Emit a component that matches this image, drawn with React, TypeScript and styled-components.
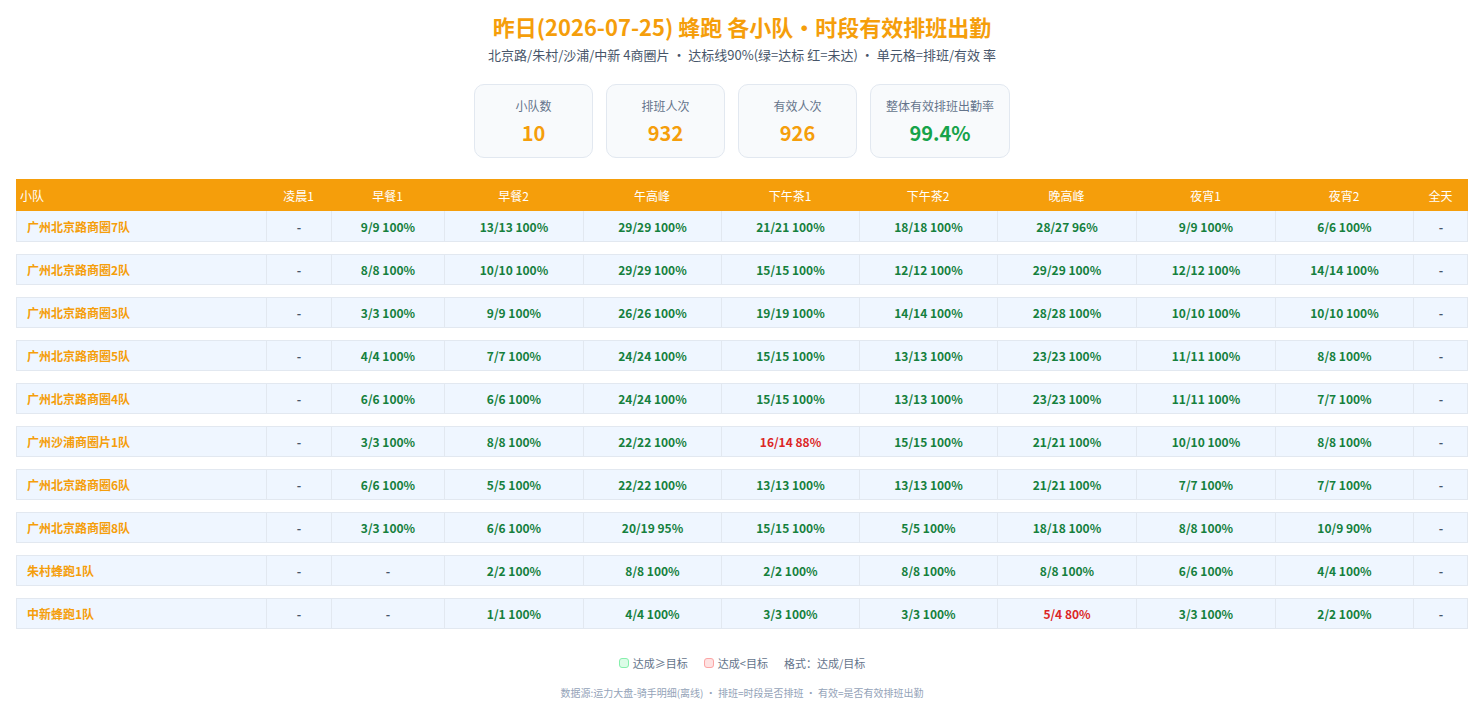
import React from "react";
import styled, { createGlobalStyle } from "styled-components";

const GlobalStyle = createGlobalStyle`
  body {
    margin: 0;
    background: #ffffff;
    font-family: "Noto Sans CJK SC", "Noto Sans", sans-serif;
  }
`;

type Cell = [number, number] | null;

interface Team {
  name: string;
  cells: Cell[];
}

const columns = ["凌晨1", "早餐1", "早餐2", "午高峰", "下午茶1", "下午茶2", "晚高峰", "夜宵1", "夜宵2", "全天"];
const widths = [250, 65, 113, 139, 138, 138, 138, 139, 139, 138, 55];

const teams: Team[] = [
  { name: "广州北京路商圈7队", cells: [null, [9, 9], [13, 13], [29, 29], [21, 21], [18, 18], [28, 27], [9, 9], [6, 6], null] },
  { name: "广州北京路商圈2队", cells: [null, [8, 8], [10, 10], [29, 29], [15, 15], [12, 12], [29, 29], [12, 12], [14, 14], null] },
  { name: "广州北京路商圈3队", cells: [null, [3, 3], [9, 9], [26, 26], [19, 19], [14, 14], [28, 28], [10, 10], [10, 10], null] },
  { name: "广州北京路商圈5队", cells: [null, [4, 4], [7, 7], [24, 24], [15, 15], [13, 13], [23, 23], [11, 11], [8, 8], null] },
  { name: "广州北京路商圈4队", cells: [null, [6, 6], [6, 6], [24, 24], [15, 15], [13, 13], [23, 23], [11, 11], [7, 7], null] },
  { name: "广州沙浦商圈片1队", cells: [null, [3, 3], [8, 8], [22, 22], [16, 14], [15, 15], [21, 21], [10, 10], [8, 8], null] },
  { name: "广州北京路商圈6队", cells: [null, [6, 6], [5, 5], [22, 22], [13, 13], [13, 13], [21, 21], [7, 7], [7, 7], null] },
  { name: "广州北京路商圈8队", cells: [null, [3, 3], [6, 6], [20, 19], [15, 15], [5, 5], [18, 18], [8, 8], [10, 9], null] },
  { name: "朱村蜂跑1队", cells: [null, null, [2, 2], [8, 8], [2, 2], [8, 8], [8, 8], [6, 6], [4, 4], null] },
  { name: "中新蜂跑1队", cells: [null, null, [1, 1], [4, 4], [3, 3], [3, 3], [5, 4], [3, 3], [2, 2], null] },
];

// 红色的两个格子按截图里的文字写死
const redCells: Record<string, string> = {
  "16/14": "16/14 88%",
  "5/4": "5/4 80%",
};

function cellText(c: [number, number]) {
  const key = `${c[0]}/${c[1]}`;
  if (redCells[key]) return redCells[key];
  const pct = Math.round((c[1] / c[0]) * 100);
  return `${key} ${pct}%`;
}

function isMiss(c: [number, number]) {
  return !!redCells[`${c[0]}/${c[1]}`];
}

const App = () => {
  return (
    <Page>
      <GlobalStyle />
      <Title>昨日(2026-07-25) 蜂跑 各小队・时段有效排班出勤</Title>
      <Subtitle>北京路/朱村/沙浦/中新 4商圈片 ・ 达标线90%(绿=达标 红=未达) ・ 单元格=排班/有效 率</Subtitle>
      <Cards>
        <Card $w={119}>
          <CardLabel>小队数</CardLabel>
          <CardValue>10</CardValue>
        </Card>
        <Card $w={119}>
          <CardLabel>排班人次</CardLabel>
          <CardValue>932</CardValue>
        </Card>
        <Card $w={119}>
          <CardLabel>有效人次</CardLabel>
          <CardValue>926</CardValue>
        </Card>
        <Card $w={140}>
          <CardLabel>整体有效排班出勤率</CardLabel>
          <CardValue $good>99.4%</CardValue>
        </Card>
      </Cards>
      <Table>
        <HeadRow>
          <HeadCell $w={widths[0]} $left>小队</HeadCell>
          {columns.map((c, i) => (
            <HeadCell key={c} $w={widths[i + 1]}>
              {c}
            </HeadCell>
          ))}
        </HeadRow>
        {teams.map((t) => (
          <Row key={t.name}>
            <NameCell $w={widths[0]}>{t.name}</NameCell>
            {t.cells.map((c, i) =>
              c ? (
                <DataCell key={i} $w={widths[i + 1]} $miss={isMiss(c)}>
                  {cellText(c)}
                </DataCell>
              ) : (
                <DashCell key={i} $w={widths[i + 1]}>
                  -
                </DashCell>
              )
            )}
          </Row>
        ))}
      </Table>
      <Legend>
        <LegendItem>
          <Swatch $tone="good" />
          达成≥目标
        </LegendItem>
        <LegendItem>
          <Swatch $tone="bad" />
          达成&lt;目标
        </LegendItem>
        <LegendItem>格式：达成/目标</LegendItem>
      </Legend>
      <Footer>数据源:运力大盘-骑手明细(离线) ・ 排班=时段是否排班 ・ 有效=是否有效排班出勤</Footer>
    </Page>
  );
};

export default App;

const Page = styled.div`
  padding: 10px 16px 14px;
  display: flex;
  flex-direction: column;
  align-items: center;
`;

const Title = styled.h1`
  margin: 0;
  font-size: 22px;
  line-height: 32px;
  font-weight: 700;
  color: #f59e0b;
`;

const Subtitle = styled.div`
  margin-top: 3px;
  font-size: 13px;
  line-height: 20px;
  color: #475569;
`;

const Cards = styled.div`
  display: flex;
  gap: 13px;
  margin-top: 19px;
`;

const Card = styled.div<{ $w: number }>`
  width: ${(p) => p.$w}px;
  height: 74px;
  box-sizing: border-box;
  border: 1px solid #e2e8f0;
  border-radius: 10px;
  background: #f8fafc;
  display: flex;
  flex-direction: column;
  align-items: center;
  padding-top: 12px;
`;

const CardLabel = styled.div`
  font-size: 12px;
  line-height: 18px;
  color: #64748b;
`;

const CardValue = styled.div<{ $good?: boolean }>`
  margin-top: 4px;
  font-size: 20px;
  line-height: 28px;
  font-weight: 700;
  color: ${(p) => (p.$good ? "#16a34a" : "#f59e0b")};
`;

const Table = styled.div`
  margin-top: 21px;
  width: 1452px;
  display: flex;
  flex-direction: column;
`;

const HeadRow = styled.div`
  display: flex;
  height: 32px;
  background: #f59e0b;
`;

const HeadCell = styled.div<{ $w: number; $left?: boolean }>`
  width: ${(p) => p.$w}px;
  flex: none;
  display: flex;
  align-items: center;
  justify-content: ${(p) => (p.$left ? "flex-start" : "center")};
  padding-left: ${(p) => (p.$left ? "4px" : "0")};
  box-sizing: border-box;
  font-size: 12px;
  color: #ffffff;
`;

const Row = styled.div`
  display: flex;
  height: 31px;
  box-sizing: border-box;
  background: #eff6ff;
  border: 1px solid #e2e8f0;
  border-top: none;
  margin-bottom: 12px;
  & + & {
    border-top: 1px solid #e2e8f0;
  }
`;

const BodyCell = styled.div<{ $w: number }>`
  width: ${(p) => p.$w}px;
  flex: none;
  display: flex;
  align-items: center;
  justify-content: center;
  box-sizing: border-box;
  font-size: 12px;
  font-weight: 700;
  & + & {
    border-left: 1px solid #e2e8f0;
  }
`;

const NameCell = styled(BodyCell)`
  justify-content: flex-start;
  padding-left: 10px;
  width: ${(p) => p.$w - 1}px;
  color: #f59e0b;
`;

const DataCell = styled(BodyCell)<{ $miss?: boolean }>`
  color: ${(p) => (p.$miss ? "#dc2626" : "#15803d")};
`;

const DashCell = styled(BodyCell)`
  color: #475569;
`;

const Legend = styled.div`
  margin-top: 12px;
  display: flex;
  gap: 16px;
  font-size: 11px;
  line-height: 20px;
  color: #64748b;
`;

const LegendItem = styled.span`
  display: inline-flex;
  align-items: center;
  gap: 4px;
`;

const Swatch = styled.span<{ $tone: "good" | "bad" }>`
  width: 10px;
  height: 10px;
  border-radius: 3px;
  box-sizing: border-box;
  background: ${(p) => (p.$tone === "good" ? "#dcfce7" : "#fee2e2")};
  border: 1px solid ${(p) => (p.$tone === "good" ? "#86efac" : "#fca5a5")};
`;

const Footer = styled.div`
  margin-top: 12px;
  font-size: 10px;
  line-height: 16px;
  color: #94a3b8;
`;
